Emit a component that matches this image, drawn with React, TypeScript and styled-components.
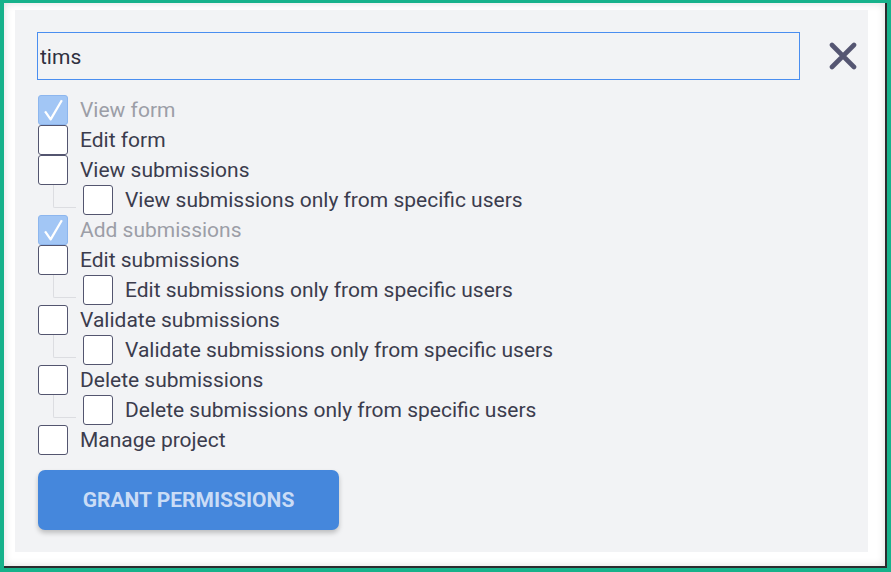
import React, { useState } from "react";
import styled, { createGlobalStyle } from "styled-components";

const GlobalStyle = createGlobalStyle`
  html, body {
    margin: 0;
    padding: 0;
    background: #ffffff;
  }
  body {
    font-family: Roboto, "Liberation Sans", Arial, sans-serif;
  }
`;

const Frame = styled.div`
  width: 891px;
  height: 572px;
  box-sizing: border-box;
  background: #17b28b;
  padding: 3px 0 0 4px;
`;

const Sheet = styled.div`
  width: 883px;
  height: 565px;
  box-sizing: border-box;
  background: #ffffff;
  border-right: 2px solid #2a2b2d;
  border-bottom: 2px solid #2a2b2d;
  box-shadow: inset 0 0 9px rgba(0, 0, 0, 0.13);
  padding: 7px 0 0 11px;
`;

const Panel = styled.div`
  width: 853px;
  height: 542px;
  box-sizing: border-box;
  background: #f2f3f5;
  padding: 22px 0 0 22px;
  display: flex;
  flex-direction: column;
`;

const SearchRow = styled.div`
  display: flex;
  align-items: center;
`;

const SearchInput = styled.input`
  width: 763px;
  height: 48px;
  box-sizing: border-box;
  border: 1px solid #4a8ef0;
  background: #f2f3f5;
  padding: 2px 0 0 2px;
  font-family: Roboto, "Liberation Sans", Arial, sans-serif;
  font-size: 21px;
  color: #2f3040;
  outline: none;
`;

const CloseButton = styled.button`
  margin-left: 29px;
  width: 28px;
  height: 28px;
  padding: 0;
  border: none;
  background: transparent;
  display: flex;
  align-items: center;
  justify-content: center;
  cursor: pointer;
`;

const List = styled.div`
  margin-top: 15px;
  display: flex;
  flex-direction: column;
`;

const Row = styled.label<{ $sub?: boolean }>`
  position: relative;
  display: flex;
  align-items: center;
  height: 30px;
  padding-left: ${(p) => (p.$sub ? "46px" : "1px")};

  ${(p) =>
    p.$sub &&
    `
    &::before {
      content: "";
      position: absolute;
      left: 16px;
      top: 0;
      width: 22px;
      height: 22px;
      border-left: 1px solid #dcdde1;
      border-bottom: 1px solid #dcdde1;
      border-bottom-left-radius: 2px;
    }
  `}
`;

const Box = styled.span<{ $checked?: boolean }>`
  width: 30px;
  height: 30px;
  box-sizing: border-box;
  flex-shrink: 0;
  border-radius: 3px;
  border: 1px solid ${(p) => (p.$checked ? "#8db6ee" : "#53556f")};
  background: ${(p) => (p.$checked ? "#a2c6f5" : "#ffffff")};
  display: flex;
  align-items: center;
  justify-content: center;
`;

const Label = styled.span<{ $disabled?: boolean }>`
  margin-left: 12px;
  font-size: 21px;
  line-height: 30px;
  color: ${(p) => (p.$disabled ? "#9c9ea7" : "#3b3c4d")};
  white-space: nowrap;
`;

const GrantButton = styled.button`
  margin-top: 15px;
  margin-left: 1px;
  width: 301px;
  height: 60px;
  border: none;
  border-radius: 7px;
  background: #4587dc;
  color: #cadcf6;
  font-family: Roboto, "Liberation Sans", Arial, sans-serif;
  font-weight: 700;
  font-size: 21px;
  box-shadow: 0 3px 5px rgba(0, 0, 0, 0.22);
  cursor: pointer;
`;

type Perm = {
  id: string;
  label: string;
  sub?: boolean;
  checked?: boolean;
  disabled?: boolean;
};

const permissions: Perm[] = [
  { id: "view_form", label: "View form", checked: true, disabled: true },
  { id: "edit_form", label: "Edit form" },
  { id: "view_sub", label: "View submissions" },
  { id: "view_sub_partial", label: "View submissions only from specific users", sub: true },
  { id: "add_sub", label: "Add submissions", checked: true, disabled: true },
  { id: "edit_sub", label: "Edit submissions" },
  { id: "edit_sub_partial", label: "Edit submissions only from specific users", sub: true },
  { id: "validate_sub", label: "Validate submissions" },
  { id: "validate_sub_partial", label: "Validate submissions only from specific users", sub: true },
  { id: "delete_sub", label: "Delete submissions" },
  { id: "delete_sub_partial", label: "Delete submissions only from specific users", sub: true },
  { id: "manage", label: "Manage project" },
];

const CheckMark = () => (
  <svg width="30" height="30" viewBox="0 0 30 30">
    <path
      d="M6.5 16.5 L12.5 25 L24.5 4.5"
      fill="none"
      stroke="#ffffff"
      strokeWidth="2.4"
      strokeLinejoin="round"
    />
  </svg>
);

const CloseIcon = () => (
  <svg width="28" height="28" viewBox="0 0 28 28">
    <path
      d="M3 3 L25 25 M25 3 L3 25"
      stroke="#555672"
      strokeWidth="4.6"
      strokeLinecap="round"
    />
  </svg>
);

export default function App() {
  const [query, setQuery] = useState("tims");
  const [checked, setChecked] = useState<Record<string, boolean>>(() =>
    Object.fromEntries(permissions.map((p) => [p.id, !!p.checked]))
  );

  const toggle = (perm: Perm) => {
    if (perm.disabled) return;
    setChecked((c) => ({ ...c, [perm.id]: !c[perm.id] }));
  };

  return (
    <>
      <GlobalStyle />
      <Frame>
        <Sheet>
          <Panel>
            <SearchRow>
              <SearchInput value={query} onChange={(e) => setQuery(e.target.value)} />
              <CloseButton aria-label="Close">
                <CloseIcon />
              </CloseButton>
            </SearchRow>

            <List>
              {permissions.map((perm) => (
                <Row key={perm.id} $sub={perm.sub} onClick={() => toggle(perm)}>
                  <Box $checked={checked[perm.id]}>{checked[perm.id] && <CheckMark />}</Box>
                  <Label $disabled={perm.disabled}>{perm.label}</Label>
                </Row>
              ))}
            </List>

            <GrantButton>GRANT PERMISSIONS</GrantButton>
          </Panel>
        </Sheet>
      </Frame>
    </>
  );
}
